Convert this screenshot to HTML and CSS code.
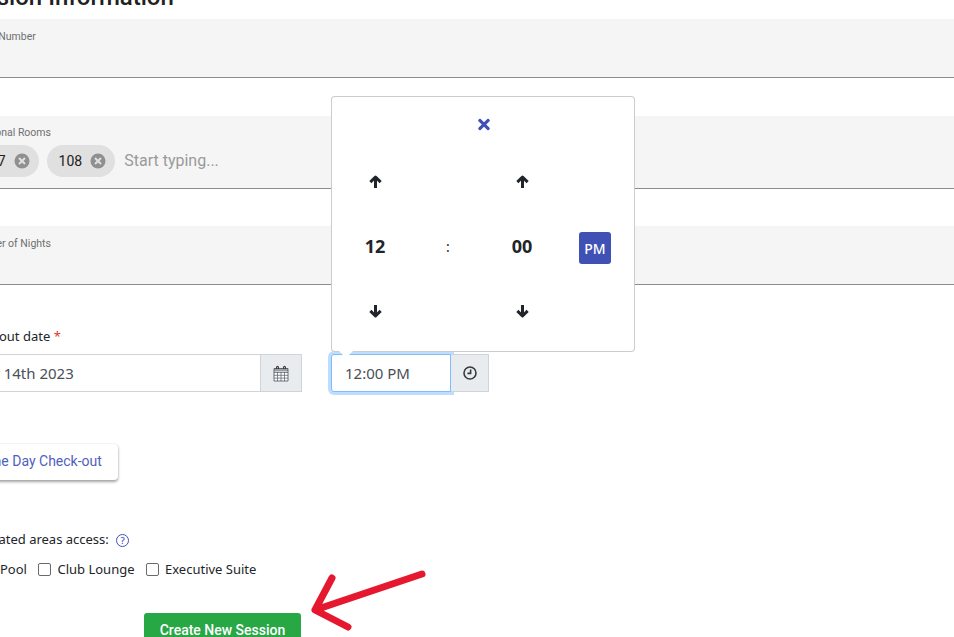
FILE: index.html
```html
<!DOCTYPE html>
<html lang="en">
<head>
<meta charset="utf-8">
<title>Session Information</title>
<link rel="stylesheet" href="styles.css">
</head>
<body>
<div class="page">
  <main class="content">
    <h2 class="title">Session Information</h2>

    <div class="field field-plain"><span class="field-label">Room Number</span></div>

    <div class="field field-chips">
      <span class="field-label">Additional Rooms</span>
      <div class="chip-row">
        <span class="chip">107<svg class="chip-x" viewBox="0 0 16 16"><circle cx="8" cy="8" r="7.5"/><path d="M5 5l6 6M11 5l-6 6"/></svg></span>
        <span class="chip">108<svg class="chip-x" viewBox="0 0 16 16"><circle cx="8" cy="8" r="7.5"/><path d="M5 5l6 6M11 5l-6 6"/></svg></span>
        <span class="placeholder">Start typing...</span>
      </div>
    </div>

    <div class="field field-plain field-nights"><span class="field-label">Number of Nights</span></div>

    <label class="form-label">Check-out date <span class="req">*</span></label>
    <div class="datetime">
      <div class="group group-date">
        <div class="control">Nov 14th 2023</div>
        <div class="addon addon-date">
          <svg width="16" height="17" viewBox="0 0 16 17"><path class="cal-body" d="M1 4h14v12H1z"/><path class="cal-grid" d="M1 7.5h14M1 10.3h14M1 13.1h14M4.5 7v9M8 7v9M11.5 7v9"/><path class="cal-frame" d="M1 3.5h14V16H1z"/><path class="cal-head" d="M1 3.5h14V6.5H1z"/><path class="cal-ring" d="M3.6 4V2.2c0-1.3 1.8-1.3 1.8 0V4M10.6 4V2.2c0-1.3 1.8-1.3 1.8 0V4"/></svg>
        </div>
      </div>
      <div class="group group-time">
        <div class="control control-focus">12:00 PM</div>
        <div class="addon addon-time">
          <svg width="14" height="14" viewBox="0 0 14 14"><circle class="clock" cx="7" cy="7" r="6"/><path class="clock" d="M7.6 3.6v3.8H4.4"/></svg>
        </div>
        <div class="popover">
          <button class="pick-close" type="button" aria-label="Close"><svg width="12" height="17" viewBox="0 0 352 512"><path d="M242.72 256l100.07-100.07c12.28-12.28 12.28-32.19 0-44.48l-22.24-22.24c-12.28-12.28-32.19-12.28-44.48 0L176 189.28 75.93 89.21c-12.28-12.28-32.19-12.28-44.48 0L9.21 111.45c-12.28 12.28-12.28 32.19 0 44.48L109.28 256 9.21 356.07c-12.28 12.28-12.28 32.19 0 44.48l22.24 22.24c12.28 12.28 32.2 12.28 44.48 0L176 322.72l100.07 100.07c12.28 12.28 32.2 12.28 44.48 0l22.24-22.24c12.28-12.28 12.28-32.19 0-44.48L242.72 256z"/></svg></button>
          <span class="pick-cell"><svg class="pick-arrow" viewBox="0 0 14 14"><path d="M7 13V3M2.2 7.6 7 2.8l4.8 4.8"/></svg></span>
          <span class="pick-cell"></span>
          <span class="pick-cell"><svg class="pick-arrow" viewBox="0 0 14 14"><path d="M7 13V3M2.2 7.6 7 2.8l4.8 4.8"/></svg></span>
          <span class="pick-cell"></span>
          <span class="pick-cell pick-value">12</span>
          <span class="pick-cell pick-colon">:</span>
          <span class="pick-cell pick-value">00</span>
          <span class="pick-cell"><span class="pick-ampm">PM</span></span>
          <span class="pick-cell"><svg class="pick-arrow" viewBox="0 0 14 14"><path d="M7 1v10M2.2 6.4 7 11.2l4.8-4.8"/></svg></span>
          <span class="pick-cell"></span>
          <span class="pick-cell"><svg class="pick-arrow" viewBox="0 0 14 14"><path d="M7 1v10M2.2 6.4 7 11.2l4.8-4.8"/></svg></span>
          <span class="pick-cell"></span>
          <span class="popover-tip"></span>
        </div>
      </div>
    </div>

    <button class="btn-same" type="button">Same Day Check-out</button>

    <div class="areas-label">Designated areas access: <span class="help">?</span></div>
    <div class="areas">
      <span class="check"><span class="box"></span>Pool</span>
      <span class="check"><span class="box"></span>Club Lounge</span>
      <span class="check"><span class="box"></span>Executive Suite</span>
    </div>

    <button class="btn-create" type="button">Create New Session</button>
  </main>

  <svg class="callout" width="140" height="80" viewBox="0 0 140 80"><path d="M122 17 15 53M32 21 15 53 48 70"/></svg>
</div>
</body>
</html>
```

FILE: styles.css
```css
* { box-sizing: border-box; }
html, body { margin: 0; padding: 0; background: #fff; }
body { font-family: "Noto Sans", "Open Sans", sans-serif; color: #212529; font-size: 14px; }

.page { position: relative; width: 954px; height: 637px; overflow: hidden; }
.content { margin: -15px 0 0 -44px; width: 1100px; }

.title {
  margin: 0 0 9px;
  padding-left: 1px;
  height: 25px;
  font: 500 24px/25px Roboto, sans-serif;
  color: #212121;
}

.field {
  background: #f5f5f5;
  border-bottom: 1px solid #8c8c8c;
  padding: 11px 12px 0;
}
.field-plain { height: 59px; margin-bottom: 38px; }
.field-chips { height: 73px; margin-bottom: 37px; padding-top: 10px; }
.field-nights { margin-bottom: 42px; }
.field-label { display: block; font: 400 10.5px/14px Roboto, sans-serif; color: #6f6f6f; }

.chip-row { display: flex; align-items: center; gap: 8px; margin: 5px 0 0 2px; }
.chip {
  display: inline-flex; align-items: center; gap: 8px;
  height: 32px; padding: 0 9px 0 12px;
  background: #e0e0e0; border-radius: 16px;
  font: 400 14px Roboto, sans-serif; color: #212121;
}
.chip-x { width: 16px; height: 16px; }
.chip-x circle { fill: #8f8f8f; }
.chip-x path { stroke: #e0e0e0; stroke-width: 2; fill: none; }
.placeholder { margin: -2px 0 0 1px; font: 400 16px Roboto, sans-serif; color: #9a9a9a; }

.form-label { display: block; height: 27px; padding-left: 2px; font-size: 13px; line-height: 18px; }
.req { color: #e3342f; }

.datetime { display: flex; gap: 29px; width: 533px; }
.group { display: flex; height: 38px; }
.group-date { width: 346px; }
.group-time { position: relative; width: 158px; }
.control {
  flex: 1;
  border: 1px solid #ced4da;
  padding: 0 13px;
  font-size: 15px; line-height: 36px;
  color: #495057;
  background: #fff;
}
.group-date .control { padding-left: 15px; }
.control-focus {
  flex: 0 0 120px;
  border-color: #80bdff;
  border-radius: 3px 0 0 3px;
  box-shadow: 0 0 0 3px rgba(128, 189, 255, .5);
}
.addon {
  display: flex; align-items: center; justify-content: center;
  border: 1px solid #ced4da; border-left: 0;
  background: #e9ecef;
}
.addon-date { flex: 0 0 41px; }
.addon-time { flex: 0 0 38px; }
.cal-body { fill: #fff; }
.cal-frame { fill: none; stroke: #495057; stroke-width: .8; }
.cal-head { fill: #495057; opacity: .55; }
.cal-ring { stroke: #343a40; stroke-width: 1.1; fill: none; }
.cal-grid { stroke: #5f6b78; stroke-width: .8; fill: none; }
.clock { fill: none; stroke: #343a40; stroke-width: 1.6; }

.popover {
  position: absolute; left: 0; bottom: 40px;
  width: 304px; height: 256px;
  display: grid;
  grid-template-columns: 86px 60px 88px 58px;
  grid-template-rows: 54px 60px 70px 60px;
  background: #fff;
  border: 1px solid rgba(0, 0, 0, .2);
  border-radius: 4px;
  z-index: 2;
}
.popover-tip {
  position: absolute; left: 7px; bottom: -7px;
  width: 0; height: 0;
  border-left: 7px solid transparent; border-right: 7px solid transparent;
  border-top: 7px solid #fff;
}
.pick-close {
  grid-column: 1 / -1;
  padding: 0; border: 0; background: none;
  display: flex; align-items: center; justify-content: center;
  margin-right: -12px;
}
.pick-close svg { fill: #3f51b5; }
.pick-cell { display: flex; align-items: center; justify-content: center; }
.pick-arrow { width: 15px; height: 15px; }
.pick-arrow path { fill: none; stroke: #212529; stroke-width: 2.8; stroke-linejoin: round; }
.pick-value { font-size: 18px; font-weight: 700; color: #212529; }
.pick-colon { font-size: 14px; }
.pick-ampm {
  display: flex; align-items: center; justify-content: center;
  width: 32px; height: 32px; margin-top: 4px;
  background: #3f51b5; color: #fff; border-radius: 3px; font-size: 14px; font-weight: 500;
}

.btn-same {
  display: block;
  margin: 52px 0 0 5px;
  width: 157px; height: 36px;
  padding: 0 4px 2px 0;
  border: 0; border-radius: 4px;
  background: #fff; color: #4f5fbd;
  font: 400 14px Roboto, sans-serif;
  box-shadow: 0 2px 3px rgba(0, 0, 0, .35), 0 0 2px rgba(0, 0, 0, .12);
}

.areas-label { margin-top: 50px; line-height: 18px; font-size: 13px; }
.help {
  display: inline-flex; align-items: center; justify-content: center;
  width: 13px; height: 13px; margin-left: 4px;
  border: 1.5px solid #3f51b5; border-radius: 50%;
  color: #3f51b5; font-size: 9.5px; font-weight: 500; line-height: 1;
}
.areas { display: flex; gap: 11.5px; margin: 12px 0 0 25px; font-size: 13px; line-height: 18px; }
.check { display: flex; align-items: center; gap: 6px; }
.box { width: 13px; height: 13px; border: 1px solid #6b6b6b; border-radius: 2px; background: #fff; }

.btn-create {
  display: block;
  margin: 35px 0 0 188px;
  width: 157px; height: 40px;
  border: 0; border-radius: 3px 3px 0 0;
  background: #28a745; color: #fff;
  font: 500 14px Roboto, sans-serif;
  padding: 0 0 6px;
}

.callout { position: absolute; left: 300px; top: 557px; }
.callout path { fill: none; stroke: #e5182f; stroke-width: 7; stroke-linecap: round; stroke-linejoin: round; }
```
